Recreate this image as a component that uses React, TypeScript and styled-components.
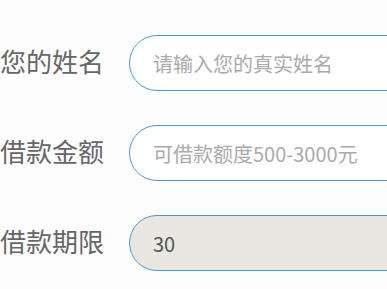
import styled, { createGlobalStyle } from "styled-components";

const GlobalStyle = createGlobalStyle`
  html, body {
    margin: 0;
    padding: 0;
    background: #fdfdfd;
    overflow: hidden;
  }
  body {
    font-family: "Noto Sans CJK SC", "Noto Sans", sans-serif;
  }
`;

const Form = styled.div`
  display: flex;
  flex-direction: column;
  gap: 34px;
  padding-top: 35px;
  width: 520px;
`;

const Row = styled.div`
  display: flex;
  align-items: center;
  height: 56px;
`;

const Label = styled.label`
  width: 129px;
  flex-shrink: 0;
  font-size: 26px;
  color: #666666;
  line-height: 1;
  margin-top: -4px;
`;

const Input = styled.input<{ $filled?: boolean }>`
  box-sizing: border-box;
  width: 360px;
  height: 56px;
  border: 1px solid #4b98d2;
  border-radius: 28px;
  padding: 0 0 0 23px;
  font-family: "Noto Sans CJK SC", "Noto Sans", sans-serif;
  font-size: 20px;
  color: #555555;
  background: ${(p) => (p.$filled ? "#e9e7e2" : "#ffffff")};
  outline: none;
  &::placeholder {
    color: #aaaaaa;
  }
`;

const fields = [
  { label: "您的姓名", placeholder: "请输入您的真实姓名" },
  { label: "借款金额", placeholder: "可借款额度500-3000元" },
  { label: "借款期限", value: "30", filled: true },
];

export default function App() {
  return (
    <>
      <GlobalStyle />
      <Form>
        {fields.map((f) => (
          <Row key={f.label}>
            <Label>{f.label}</Label>
            <Input
              $filled={f.filled}
              placeholder={f.placeholder}
              defaultValue={f.value}
              readOnly={f.filled}
            />
          </Row>
        ))}
      </Form>
    </>
  );
}
